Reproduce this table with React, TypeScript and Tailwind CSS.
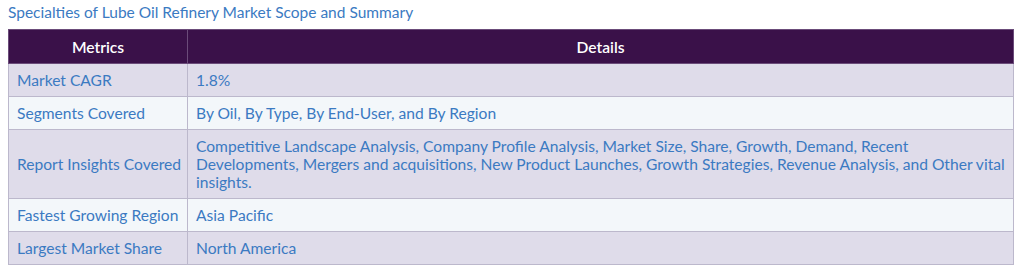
const rows: [string, string][] = [
  ['Market CAGR', '1.8%'],
  ['Segments Covered', 'By Oil, By Type, By End-User, and By Region'],
  [
    'Report Insights Covered',
    'Competitive Landscape Analysis, Company Profile Analysis, Market Size, Share, Growth, Demand, Recent Developments, Mergers and acquisitions, New Product Launches, Growth Strategies, Revenue Analysis, and Other vital insights.',
  ],
  ['Fastest Growing Region', 'Asia Pacific'],
  ['Largest Market Share', 'North America'],
];

export default function App() {
  return (
    <div className="bg-white w-[1024px] h-[274px] pl-2 pt-[2px] font-['Lato','Open_Sans',sans-serif]">
      <h2 className="text-[15.5px] leading-[20px] text-[#3b7ac2] mb-[7px]">
        Specialties of Lube Oil Refinery Market Scope and Summary
      </h2>
      <table className="w-[1006px] table-fixed border-collapse text-[15.6px] leading-[18px]">
        <thead>
          <tr className="bg-[#3a1149] text-white h-[34px]">
            <th className="w-[179px] font-semibold border border-[#6b4c7a] text-center">Metrics</th>
            <th className="font-semibold border border-[#6b4c7a] text-center">Details</th>
          </tr>
        </thead>
        <tbody>
          {rows.map(([metric, detail], i) => (
            <tr key={metric} className={i % 2 === 0 ? 'bg-[#dfdcea]' : 'bg-[#f3f7fa]'}>
              <td className="border border-[#bcb8cc] pl-2 pr-1 py-[7px] text-[#3b7ac2] whitespace-nowrap">{metric}</td>
              <td className="border border-[#bcb8cc] pl-2 pr-1 py-[7px] text-[#3b7ac2]">{detail}</td>
            </tr>
          ))}
        </tbody>
      </table>
    </div>
  );
}
